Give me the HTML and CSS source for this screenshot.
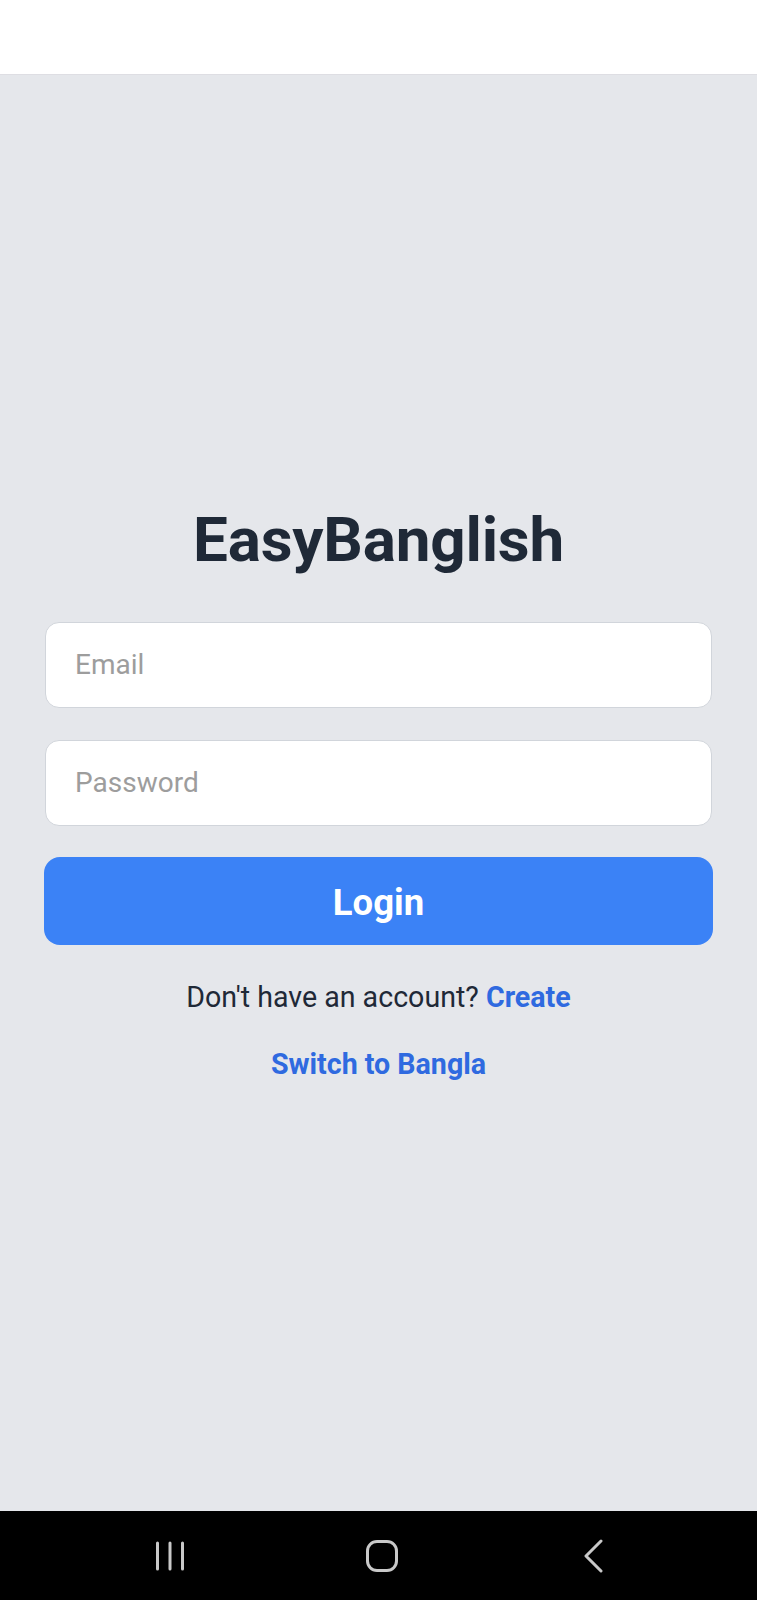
FILE: index.html
```html
<!DOCTYPE html>
<html lang="en">
<head>
<meta charset="utf-8">
<title>EasyBanglish</title>
<link rel="stylesheet" href="styles.css">
</head>
<body>
<div class="app">
  <header class="status"></header>
  <main class="screen">
    <h1 class="title">EasyBanglish</h1>
    <form class="form">
      <input class="field" type="email" placeholder="Email">
      <input class="field" type="password" placeholder="Password">
      <button class="btn" type="button">Login</button>
    </form>
    <p class="signup">Don't have an account? <a class="link" href="#">Create</a></p>
    <p class="switch"><a class="link" href="#">Switch to Bangla</a></p>
  </main>
  <nav class="navbar">
    <div class="nav-slot">
      <svg width="30" height="30" viewBox="0 0 30 30" aria-hidden="true">
        <g stroke="#c9c9c9" stroke-width="3" stroke-linecap="round">
          <line x1="2.5" y1="2" x2="2.5" y2="28"/>
          <line x1="15" y1="2" x2="15" y2="28"/>
          <line x1="27.5" y1="2" x2="27.5" y2="28"/>
        </g>
      </svg>
    </div>
    <div class="nav-slot">
      <svg width="34" height="34" viewBox="0 0 34 34" aria-hidden="true">
        <rect x="2.5" y="2.5" width="29" height="29" rx="9.5" fill="none" stroke="#c9c9c9" stroke-width="3"/>
      </svg>
    </div>
    <div class="nav-slot">
      <svg width="20" height="34" viewBox="0 0 20 34" aria-hidden="true">
        <polyline points="17,2 2,17 17,32" fill="none" stroke="#c9c9c9" stroke-width="3" stroke-linecap="round" stroke-linejoin="round"/>
      </svg>
    </div>
  </nav>
</div>
</body>
</html>
```

FILE: styles.css
```css
* { box-sizing: border-box; }

html, body {
  margin: 0;
  padding: 0;
}

body {
  font-family: Roboto, "Liberation Sans", Arial, sans-serif;
  background: #e5e7eb;
}

.app {
  display: flex;
  flex-direction: column;
  height: 1600px;
}

.status {
  height: 75px;
  background: #ffffff;
  box-shadow: 0 1px 2px rgba(0, 0, 0, 0.06);
  border-bottom: 1px solid #dedee3;
  flex: none;
}

.screen {
  flex: 1;
  display: flex;
  flex-direction: column;
  justify-content: center;
  align-items: stretch;
  padding: 0 45px;
  background: #e5e7eb;
}

.title {
  margin: 0 0 45px;
  font-size: 62px;
  line-height: 74px;
  font-weight: 700;
  color: #1f2937;
  text-align: center;
  letter-spacing: -0.2px;
}

.form {
  display: flex;
  flex-direction: column;
  gap: 32px;
  margin: 0;
}

.field {
  display: block;
  width: 100%;
  height: 86px;
  padding: 0 29px;
  border: 1px solid #d1d5db;
  border-radius: 14px;
  background: #ffffff;
  font-family: Roboto, "Liberation Sans", Arial, sans-serif;
  font-size: 28px;
  color: #1f2937;
  outline: none;
}

.field::placeholder {
  color: #9d9d9d;
}

.btn {
  display: block;
  width: calc(100% + 2px);
  margin: -1px -1px 0;
  height: 88px;
  padding: 4px 0 0;
  border: none;
  border-radius: 16px;
  background: #3b82f6;
  color: #ffffff;
  font-family: Roboto, "Liberation Sans", Arial, sans-serif;
  font-size: 36.5px;
  font-weight: 700;
}

.signup {
  margin: 32px 0 0;
  font-size: 28.6px;
  line-height: 40px;
  color: #1f2937;
  text-align: center;
}

.switch {
  margin: 27px 0 0;
  font-size: 28.6px;
  line-height: 40px;
  text-align: center;
}

.link {
  color: #2f6ae0;
  font-weight: 700;
  text-decoration: none;
}

.navbar {
  flex: none;
  height: 89px;
  background: #000000;
  display: flex;
  align-items: center;
  padding-left: 64px;
}

.nav-slot {
  width: 212px;
  display: flex;
  justify-content: center;
  align-items: center;
}

.nav-slot svg {
  display: block;
}
```
